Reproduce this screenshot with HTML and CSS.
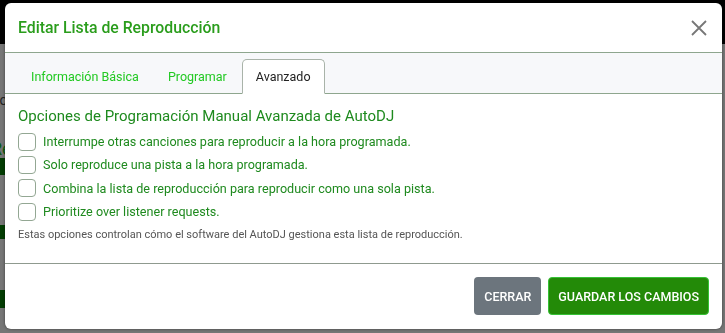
FILE: index.html
```html
<!DOCTYPE html>
<html lang="es">
<head>
  <meta charset="UTF-8">
  <meta name="viewport" content="width=device-width, initial-scale=1.0">
  <title>Editar Lista de Reproducción</title>
  <link rel="stylesheet" href="styles.css">
</head>
<body>
  <div class="page">
    <div class="page-nav"></div>
    <div class="page-body">
      <p class="page-text">Lo</p>
      <p class="page-title">Re</p>
      <span class="page-btn"></span>
      <span class="page-btn second"></span>
      <span class="page-btn third"></span>
    </div>
  </div>

  <div class="overlay">
    <div class="modal">
      <div class="modal-header">
        <h5 class="modal-title">Editar Lista de Reproducción</h5>
        <button class="close" type="button" aria-label="Cerrar">
          <svg width="16" height="16" viewBox="0 0 16 16">
            <path d="M1 1 L15 15 M15 1 L1 15" stroke="#777" stroke-width="1.8" fill="none"/>
          </svg>
        </button>
      </div>

      <ul class="tabs">
        <li><a href="#">Información Básica</a></li>
        <li><a href="#">Programar</a></li>
        <li><a href="#" class="active">Avanzado</a></li>
      </ul>

      <div class="modal-body">
        <h6 class="section-title">Opciones de Programación Manual Avanzada de AutoDJ</h6>
        <label class="check"><input type="checkbox"><span>Interrumpe otras canciones para reproducir a la hora programada.</span></label>
        <label class="check"><input type="checkbox"><span>Solo reproduce una pista a la hora programada.</span></label>
        <label class="check"><input type="checkbox"><span>Combina la lista de reproducción para reproducir como una sola pista.</span></label>
        <label class="check"><input type="checkbox"><span>Prioritize over listener requests.</span></label>
        <p class="help">Estas opciones controlan cómo el software del AutoDJ gestiona esta lista de reproducción.</p>
      </div>

      <div class="modal-footer">
        <button type="button" class="btn btn-gray">Cerrar</button>
        <button type="button" class="btn btn-green">Guardar los cambios</button>
      </div>
    </div>
  </div>
</body>
</html>
```

FILE: styles.css
```css
* {
  margin: 0;
  padding: 0;
  box-sizing: border-box;
  font-family: Roboto, 'Liberation Sans', sans-serif;
}

body {
  width: 725px;
  height: 333px;
  overflow: hidden;
  background: #767676;
}

/* page behind the dialog, already dimmed */
.page-nav {
  height: 44px;
  background: #000;
}

.page-body {
  position: relative;
  height: 289px;
}

.page-text {
  position: absolute;
  left: -8px;
  top: 48px;
  color: #222;
  font-size: 14px;
}

.page-title {
  position: absolute;
  left: -9px;
  top: 94px;
  color: #0e5a0e;
  font-size: 18px;
}

.page-btn {
  position: absolute;
  left: 0;
  top: 114px;
  width: 6px;
  height: 17px;
  background: #033d03;
}

.page-btn.second { top: 181px; height: 14px; }
.page-btn.third { top: 246px; height: 18px; }

.overlay {
  position: fixed;
  inset: 0;
  padding: 3px 3px 4px 5px;
}

.modal {
  width: 717px;
  height: 326px;
  background: #fff;
  border-radius: 6px;
  box-shadow: 0 0 3px rgba(0, 0, 0, 0.5);
  display: flex;
  flex-direction: column;
  overflow: hidden;
}

.modal-header {
  display: flex;
  justify-content: space-between;
  align-items: center;
  height: 50px;
  padding: 0 10px 0 13px;
  border-bottom: 1px solid #8ea68e;
}

.modal-title {
  font-size: 15.8px;
  font-weight: 500;
  color: #2a9d1c;
}

.close {
  background: none;
  border: none;
  width: 26px;
  height: 26px;
  display: flex;
  align-items: center;
  justify-content: center;
}

.tabs {
  list-style: none;
  display: flex;
  gap: 1px;
  padding: 6px 13px 0 12px;
  background: #f7f8fa;
  border-bottom: 1px solid #8ea68e;
}

.tabs a {
  display: block;
  padding: 7px 13px;
  margin-bottom: -1px;
  font-size: 12.5px;
  line-height: 19px;
  color: #22c922;
  text-decoration: none;
  border: 1px solid transparent;
  border-radius: 5px 5px 0 0;
}

.tabs a.active {
  background: #fff;
  color: #222;
  border-color: #a9b3a9 #a9b3a9 #fff;
}

.modal-body {
  flex: 1;
  padding: 12px 13px 0;
}

.section-title {
  font-size: 15px;
  font-weight: 400;
  line-height: 20px;
  color: #1e8a1e;
  margin-bottom: 4px;
}

.check {
  display: flex;
  align-items: center;
  gap: 7px;
  height: 23.3px;
  font-size: 12.6px;
  color: #1f8a1f;
}

.check input {
  appearance: none;
  width: 18px;
  height: 18px;
  border: 1px solid #93a793;
  border-radius: 4px;
  background: #fff;
}

.help {
  margin-top: 5px;
  font-size: 11px;
  color: #555;
}

.modal-footer {
  display: flex;
  justify-content: flex-end;
  gap: 7px;
  padding: 13px 13px 14px;
  border-top: 1px solid #8f9a8f;
}

.btn {
  height: 38px;
  padding: 0 9px;
  border: 1px solid transparent;
  border-radius: 4px;
  font-size: 12.5px;
  font-weight: 500;
  text-transform: uppercase;
  color: #fff;
}

.btn-gray {
  background: #6c757d;
}

.btn-green {
  background: #238a08;
  border-color: #36c236;
}
```
